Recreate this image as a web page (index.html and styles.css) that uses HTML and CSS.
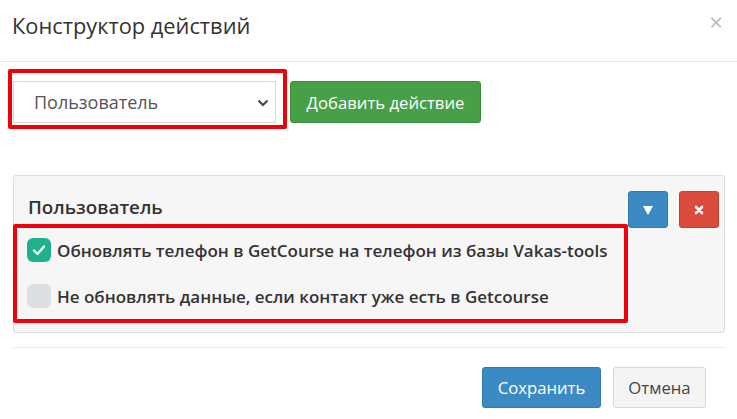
FILE: index.html
```html
<!DOCTYPE html>
<html lang="ru">
<head>
<meta charset="utf-8">
<link rel="stylesheet" href="styles.css">
</head>
<body>
<div class="modal">
  <div class="modal-header">
    <h4 class="modal-title">Конструктор действий</h4>
    <span class="close">×</span>
  </div>
  <div class="modal-body">
    <div class="toolbar">
      <div class="mark mark-select">
        <div class="select">
          <span>Пользователь</span>
          <svg class="chev" width="12" height="8" viewBox="0 0 12 8"><path d="M1.5 1.5 L6 6 L10.5 1.5" fill="none" stroke="#444" stroke-width="2"/></svg>
        </div>
      </div>
      <button class="btn btn-success">Добавить действие</button>
    </div>
    <div class="panel">
      <div class="panel-head">
        <div class="panel-title">Пользователь</div>
        <div class="panel-tools">
          <button class="btn-sq btn-blue"><svg width="12" height="12" viewBox="0 0 12 12"><path d="M1 2 H11 L6 11 Z" fill="#fff"/></svg></button>
          <button class="btn-sq btn-red"><svg width="10" height="10" viewBox="0 0 10 10"><path d="M2 2 L8 8 M8 2 L2 8" stroke="#fff" stroke-width="2.6" stroke-linecap="round"/></svg></button>
        </div>
      </div>
      <div class="mark mark-checks">
        <label class="check-row">
          <span class="cb cb-on"><svg width="14" height="12" viewBox="0 0 14 12"><path d="M2 6.5 L5.5 10 L12 2.5" fill="none" stroke="#fff" stroke-width="2.2" stroke-linecap="round" stroke-linejoin="round"/></svg></span>
          <span class="check-text">Обновлять телефон в GetCourse на телефон из базы Vakas-tools</span>
        </label>
        <label class="check-row">
          <span class="cb"></span>
          <span class="check-text">Не обновлять данные, если контакт уже есть в Getcourse</span>
        </label>
      </div>
    </div>
  </div>
  <div class="modal-footer">
    <button class="btn btn-primary">Сохранить</button>
    <button class="btn btn-default">Отмена</button>
  </div>
</div>
</body>
</html>
```
FILE: styles.css
```css
* { box-sizing: border-box; }
html, body { margin: 0; background: #fff; }
body { font-family: "Open Sans", "Noto Sans", sans-serif; color: #333; }
.modal { width: 737px; height: 419px; position: relative; }
.modal-header {
  height: 62px;
  border-bottom: 1px solid #e8e8e8;
  display: flex;
  align-items: center;
  justify-content: space-between;
  padding: 0 12px 0 12px;
}
.modal-title {
  margin: 0;
  font-weight: 400;
  font-size: 21.8px;
  color: #333;
  padding-bottom: 10px;
}
.close { color: #bcbcbc; font-size: 24px; line-height: 1; padding-bottom: 18px; margin-right: 2px; }
.modal-body { padding: 7px 12px 0 13px; }
.toolbar { display: flex; align-items: flex-start; margin-left: -5px; }
.mark { border: 4px solid #f0000a; border-radius: 2px; }
.mark-select { width: 279px; height: 60px; padding: 8px 7px 0 1px; }
.select {
  height: 42px;
  border: 1px solid #d6d6d6;
  background: #fff;
  display: flex;
  align-items: center;
  justify-content: space-between;
  padding: 0 6px 0 20px;
  font-size: 18px;
  color: #555;
}
.chev { margin-top: 1px; }
.btn {
  font-family: inherit;
  font-size: 16.7px;
  border-radius: 3px;
  border: 1px solid transparent;
  cursor: pointer;
  padding: 0;
  height: 42px;
}
.btn-success {
  margin-top: 12px;
  margin-left: 3px;
  width: 191px;
  background: #48a046;
  border-color: #3a8a3a;
  color: #fff;
}
.panel {
  margin-top: 46px;
  width: 712px;
  height: 158px;
  background: #f6f6f6;
  border: 1px solid #dcdcdc;
  border-radius: 3px;
}
.panel-head {
  display: flex;
  justify-content: space-between;
  align-items: flex-start;
  padding: 15px 5px 0 14px;
  height: 48px;
}
.panel-title { font-size: 18.8px; font-weight: 600; color: #333; margin-top: 3px; }
.panel-tools { display: flex; gap: 11px; }
.btn-sq {
  width: 40px;
  height: 37px;
  border: 1px solid transparent;
  border-radius: 3px;
  display: flex;
  align-items: center;
  justify-content: center;
  padding: 0;
}
.btn-blue { background: #3b8ac3; border-color: #337ab0; }
.btn-red { background: #db4b3b; border-color: #c9402f; }
.mark-checks {
  width: 615px;
  height: 99px;
  margin-left: -1px;
  padding: 10px 0 0 10px;
  display: flex;
  flex-direction: column;
  gap: 22px;
}
.check-row { display: flex; align-items: center; gap: 6px; height: 24px; }
.cb {
  width: 24px;
  height: 24px;
  border-radius: 6px;
  background: #dcdfe2;
  display: flex;
  align-items: center;
  justify-content: center;
  flex: none;
}
.cb-on { background: #22b08c; }
.check-text { font-size: 17px; font-weight: 600; color: #333; white-space: nowrap; }
.modal-footer {
  position: absolute;
  left: 13px;
  top: 347px;
  width: 712px;
  border-top: 1px solid #e8e8e8;
  display: flex;
  justify-content: flex-end;
  gap: 12px;
  padding: 19px 19px 0 0;
}
.btn-primary { width: 119px; height: 41px; background: #3b8ac3; border-color: #337ab0; color: #fff; }
.btn-default { width: 93px; height: 41px; background: #f4f4f4; border-color: #d8d8d8; color: #444; }
```
